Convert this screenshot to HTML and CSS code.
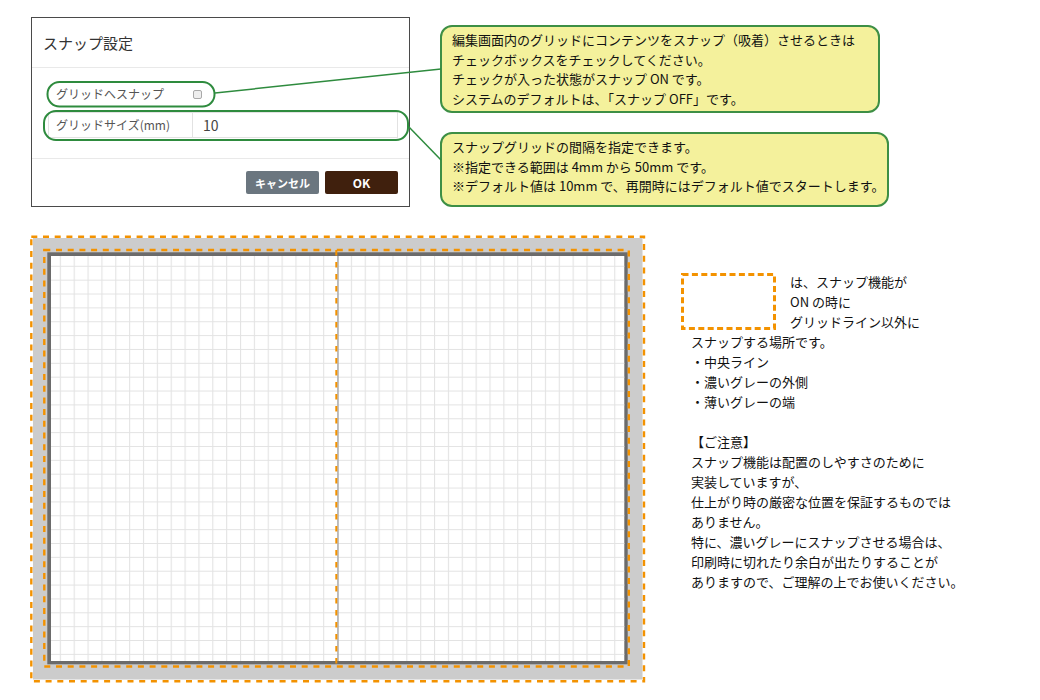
FILE: index.html
```html
<!DOCTYPE html>
<html lang="ja">
<head>
<meta charset="utf-8">
<title>スナップ設定</title>
<link rel="stylesheet" href="styles.css">
</head>
<body>
<div class="page">
  <section class="top">
    <div class="dialog">
      <div class="dialog-header">スナップ設定</div>
      <div class="dialog-body">
        <div class="row row-check">
          <span class="label">グリッドへスナップ</span>
          <span class="checkbox"></span>
        </div>
        <div class="input-group">
          <span class="addon">グリッドサイズ(mm)</span>
          <span class="input">10</span>
        </div>
      </div>
      <div class="dialog-footer">
        <span class="btn btn-cancel">キャンセル</span>
        <span class="btn btn-ok">OK</span>
      </div>
    </div>
    <div class="callouts">
      <div class="callout c1">
        編集画面内のグリッドにコンテンツをスナップ（吸着）させるときは<br>
        チェックボックスをチェックしてください。<br>
        チェックが入った状態がスナップ ON です。<br>
        システムのデフォルトは、「スナップ OFF」です。
      </div>
      <div class="callout c2">
        スナップグリッドの間隔を指定できます。<br>
        ※指定できる範囲は 4mm から 50mm です。<br>
        ※デフォルト値は 10mm で、再開時にはデフォルト値でスタートします。
      </div>
    </div>
    <svg class="connectors" width="1040" height="215" viewBox="0 0 1040 215">
      <rect x="47.5" y="82" width="167" height="24.5" rx="12" fill="none" stroke="#2e8b3e" stroke-width="2"/>
      <rect x="44" y="111" width="364" height="29" rx="12" fill="none" stroke="#2e8b3e" stroke-width="2"/>
      <line x1="215" y1="93" x2="441" y2="69" stroke="#2e8b3e" stroke-width="1.5"/>
      <line x1="408" y1="126" x2="441" y2="160" stroke="#2e8b3e" stroke-width="1.5"/>
    </svg>
  </section>

  <section class="bottom">
    <svg class="spread" width="616" height="448" viewBox="0 0 616 448">
      <defs>
        <pattern id="grid" width="13.86" height="13.86" patternUnits="userSpaceOnUse" x="29.8" y="30.8">
          <path d="M0.5 0V13.86M0 0.5H13.86" stroke="#e3e3e3" stroke-width="1.2" fill="none"/>
        </pattern>
      </defs>
      <rect x="3" y="3" width="609.5" height="441.5" fill="#cccccc"/>
      <rect x="1.3" y="1.7" width="612.7" height="444.6" fill="none" stroke="#f39200" stroke-width="2.4" stroke-dasharray="6 5.7"/>
      <rect x="17.3" y="17.3" width="580.4" height="412" fill="#6b6b6b"/>
      <rect x="21" y="21" width="573.3" height="405" fill="#ffffff"/>
      <rect x="21" y="21" width="573.3" height="405" fill="url(#grid)"/>
      <line x1="308" y1="21" x2="308" y2="426" stroke="#a8a8a8" stroke-width="1.4"/>
      <rect x="14.3" y="15" width="584.5" height="416.5" fill="none" stroke="#f39200" stroke-width="2.4" stroke-dasharray="6 5.7"/>
      <line x1="306.3" y1="15" x2="306.3" y2="431" stroke="#f39200" stroke-width="2" stroke-dasharray="5.5 6.5"/>
    </svg>
    <div class="notes">
      <div class="legend">
        <svg class="legend-box" width="96" height="58" viewBox="0 0 96 58">
          <rect x="1.5" y="1.5" width="92" height="54" fill="none" stroke="#f39200" stroke-width="3" stroke-dasharray="6 3.4"/>
        </svg>
        <div class="legend-text">
          は、スナップ機能が<br>
          ON の時に<br>
          グリッドライン以外に
        </div>
      </div>
      <div class="note-text">
        スナップする場所です。<br>
        ・中央ライン<br>
        ・濃いグレーの外側<br>
        ・薄いグレーの端<br>
        <br>
        【ご注意】<br>
        スナップ機能は配置のしやすさのために<br>
        実装していますが、<br>
        仕上がり時の厳密な位置を保証するものでは<br>
        ありません。<br>
        特に、濃いグレーにスナップさせる場合は、<br>
        印刷時に切れたり余白が出たりすることが<br>
        ありますので、ご理解の上でお使いください。
      </div>
    </div>
  </section>
</div>
</body>
</html>
```

FILE: styles.css
```css
* { box-sizing: border-box; }

html, body {
  margin: 0;
  padding: 0;
  background: #ffffff;
}

body {
  font-family: "Noto Sans CJK JP", "Noto Sans", sans-serif;
  color: #1a1a1a;
  width: 1040px;
  height: 700px;
  overflow: hidden;
}

.top {
  position: relative;
  display: flex;
  align-items: flex-start;
  padding: 17px 0 0 31px;
  height: 235px;
}

/* ---------- dialog ---------- */
.dialog {
  width: 379px;
  height: 190px;
  border: 1px solid #4a4a4a;
  background: #fff;
  display: flex;
  flex-direction: column;
}

.dialog-header {
  height: 50px;
  padding: 15px 11px 0;
  font-size: 15px;
  line-height: 20px;
  color: #333;
  border-bottom: 1px solid #e9e9e9;
}

.dialog-body {
  height: 91px;
  padding: 15px 10px 0 16px;
  border-bottom: 1px solid #e9e9e9;
}

.row-check {
  display: flex;
  align-items: center;
  height: 22px;
  padding-left: 8px;
}

.label, .addon {
  font-size: 12px;
  color: #555;
  line-height: 16px;
}

.checkbox {
  width: 9px;
  height: 9px;
  margin-left: 29px;
  border: 1px solid #a9a9a9;
  border-radius: 2px;
  background: #eeeeee;
}

.input-group {
  display: flex;
  margin-top: 7px;
  width: 350px;
  height: 26px;
  border: 1px solid #e2e2e2;
}

.addon {
  width: 144px;
  padding-left: 7px;
  display: flex;
  align-items: center;
  border-right: 1px solid #e2e2e2;
}

.input {
  flex: 1;
  padding-left: 10px;
  font-size: 14px;
  color: #444;
  display: flex;
  align-items: center;
}

.dialog-footer {
  flex: 1;
  display: flex;
  justify-content: flex-end;
  align-items: flex-start;
  gap: 6px;
  padding: 12px 11px 0 0;
}

.btn {
  height: 23px;
  display: flex;
  align-items: center;
  justify-content: center;
  color: #fff;
  font-weight: bold;
  font-size: 11px;
  border-radius: 2px;
}

.btn-cancel {
  width: 73px;
  background: #6b767f;
}

.btn-ok {
  width: 73px;
  background: #40200d;
  font-size: 12px;
}

/* ---------- callouts ---------- */
.callouts {
  display: flex;
  flex-direction: column;
  gap: 19px;
  margin: 8px 0 0 30px;
}

.callout {
  background: #f4f19c;
  border: 2px solid #3d8f45;
  border-radius: 12px;
  padding: 3px 10px 0;
  font-size: 13px;
  line-height: 19.5px;
  color: #111;
  white-space: nowrap;
}

.c1 { width: 440px; height: 88px; }
.c2 { width: 449px; height: 75px; }

.connectors {
  position: absolute;
  left: 0;
  top: 0;
  pointer-events: none;
}

/* ---------- bottom ---------- */
.bottom {
  display: flex;
  align-items: flex-start;
  padding-left: 30px;
}

.spread { display: block; flex: none; }

.notes {
  margin: 37px 0 0 35px;
  font-size: 13px;
  line-height: 20px;
  color: #111;
  white-space: nowrap;
}

.legend {
  display: flex;
  align-items: flex-start;
  height: 60px;
}

.legend-box {
  display: block;
  margin-top: 1px;
}

.legend-text {
  margin-left: 13px;
}

.note-text {
  padding-left: 10px;
}
```
